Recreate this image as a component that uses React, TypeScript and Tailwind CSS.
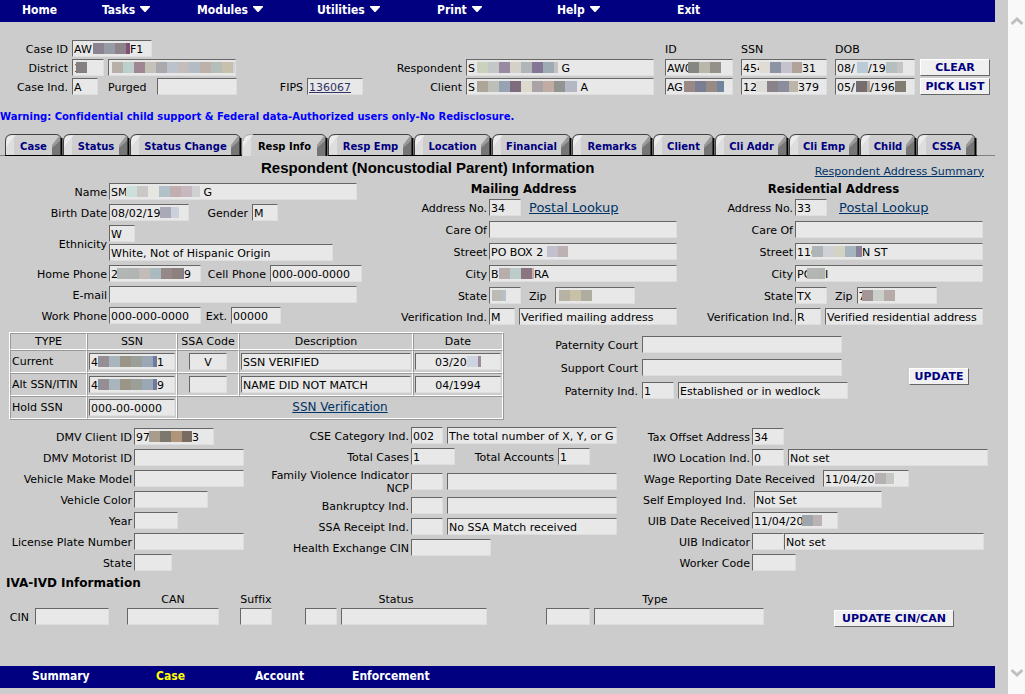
import { useId } from "react";
import type { ReactNode } from "react";

type Mosaic = { cells: string[]; last?: number };
type Part = string | Mosaic;
type Mask = { at: number; parts: Part[] };

const CELL = 11;

function MosaicStrip({ cells, last = CELL }: Mosaic) {
  const width = (cells.length - 1) * CELL + last;
  return (
    <svg width={width} height="11" className="shrink-0" aria-hidden="true">
      {cells.map((c, i) => (
        <rect key={i} x={i * CELL} y="0" width={i === cells.length - 1 ? last : CELL} height="11" fill={c} />
      ))}
    </svg>
  );
}

type BoxProps = {
  w: string;
  value?: string;
  mask?: Mask;
  id?: string;
  name?: string;
  className?: string;
};

function Box({ w, value = "", mask, id, name, className = "" }: BoxProps) {
  return (
    <span className={`relative block shrink-0 ${w}`}>
      <input
        id={id}
        aria-label={name}
        defaultValue={value}
        className={`block h-[17px] w-full border border-t-[#666] border-r-[#dedede] border-b-[#dedede] border-l-[#666] bg-[#e8e8e8] px-px pt-0.5 text-[11px] leading-[13px] text-black outline-none ${className}`}
      />
      {mask && (
        <span
          className="pointer-events-none absolute inset-y-0 flex items-center leading-[15px] whitespace-pre"
          style={{ left: mask.at }}
        >
          {mask.parts.map((p, i) =>
            typeof p === "string" ? (
              <span key={i} className="pt-0.5">
                {p}
              </span>
            ) : (
              <MosaicStrip key={i} {...p} />
            ),
          )}
        </span>
      )}
    </span>
  );
}

type FieldProps = BoxProps & {
  label: string;
  lw?: string;
  gap?: string;
  rowClass?: string;
  children?: ReactNode;
};

function Field({ label, lw = "", gap = "gap-0.5", rowClass = "h-[17px]", children, ...box }: FieldProps) {
  const id = useId();
  return (
    <div className={`flex items-center ${gap} ${rowClass}`}>
      <label htmlFor={id} className={`shrink-0 pt-0.5 text-right ${lw}`}>
        {label}
      </label>
      <Box {...box} id={id} />
      {children}
    </div>
  );
}

function PushButton({ w, children }: { w: string; children: ReactNode }) {
  return (
    <button
      type="button"
      className={`flex h-[17px] shrink-0 items-center justify-center border border-t-white border-r-[#666] border-b-[#666] border-l-white bg-[#f0f0f0] text-[11px] leading-none font-bold whitespace-nowrap text-[#000080] ${w}`}
    >
      {children}
    </button>
  );
}

const topMenu = [
  { label: "Home", w: "w-20" },
  { label: "Tasks", menu: true, w: "w-[95px]" },
  { label: "Modules", menu: true, w: "w-[120px]" },
  { label: "Utilities", menu: true, w: "w-[120px]" },
  { label: "Print", menu: true, w: "w-[120px]" },
  { label: "Help", menu: true, w: "w-[120px]" },
  { label: "Exit", w: "w-[120px]" },
];

const bottomMenu = [
  { label: "Summary", w: "w-[124px]" },
  { label: "Case", active: true, w: "w-[99px]" },
  { label: "Account", w: "w-[97px]" },
  { label: "Enforcement", w: "w-[120px]" },
];

const barFont = "font-['DejaVu_Sans_Condensed','DejaVu_Sans',sans-serif] font-bold";

function TopBar() {
  return (
    <nav className={`flex h-[22px] bg-[#000080] pb-0.5 pl-[22px] text-[12px] text-white ${barFont}`}>
      {topMenu.map((m) => (
        <div key={m.label} className={`flex ${m.w}`}>
          <button type="button" className="flex items-center gap-[5px]">
            {m.label}
            {m.menu && (
              <svg width="10" height="9" viewBox="0 0 10 9" fill="currentColor" aria-hidden="true">
                <path d="M0 0h10v1L5.500 6h-1L0 1z" />
              </svg>
            )}
          </button>
        </div>
      ))}
    </nav>
  );
}

function BottomBar() {
  return (
    <nav className={`flex h-[22px] bg-[#000080] pb-0.5 pl-8 text-[12px] text-white ${barFont}`}>
      {bottomMenu.map((m) => (
        <div key={m.label} className={`flex ${m.w}`}>
          <button type="button" className={m.active ? "text-[#ffff00]" : ""}>
            {m.label}
          </button>
        </div>
      ))}
    </nav>
  );
}

const tabs = [
  { label: "Case", w: "w-[58px]" },
  { label: "Status", w: "w-[67px]" },
  { label: "Status Change", w: "w-[112px]" },
  { label: "Resp Info", w: "w-[86px]", active: true },
  { label: "Resp Emp", w: "w-[86px]" },
  { label: "Location", w: "w-[78px]" },
  { label: "Financial", w: "w-[80px]" },
  { label: "Remarks", w: "w-[81px]" },
  { label: "Client", w: "w-[62px]" },
  { label: "Cli Addr", w: "w-[74px]" },
  { label: "Cli Emp", w: "w-[71px]" },
  { label: "Child", w: "w-[57px]" },
  { label: "CSSA", w: "w-[60px]" },
];

function Tabs() {
  return (
    <div className="mt-[11px] flex h-[22px] items-stretch text-[10px] font-bold" role="tablist">
      <span className="w-[5px] border-b border-[#808080]" />
      {tabs.map((t) => (
        <button
          key={t.label}
          type="button"
          role="tab"
          aria-selected={!!t.active}
          className={`flex h-[22px] shrink-0 items-stretch justify-between ${t.w} ${t.active ? "text-black" : "text-[#000080]"}`}
        >
          <svg width="11" height="22" viewBox="0 0 11 22" className="shrink-0" aria-hidden="true">
            <path d="M1 22V7Q1 1 7 1H11V22z" fill="#cecece" />
            <path d="M1 22V7Q1 1 7 1H11L9 4V22z" fill="#dedede" />
            <path d="M1 13V8Q1 2 7 1.500H10z" fill="#ececec" />
            <path
              d={t.active ? "M1 7Q2 .5 8 .5H11" : "M.5 22V7Q.5 .5 7 .5H11"}
              fill="none"
              stroke={t.active ? "#aaa" : "#404040"}
            />
            {!t.active && <path d="M0 21.500H11" stroke="#000" />}
          </svg>
          <span
            className={`flex grow items-center justify-center border-t border-b border-t-[#404040] bg-[#cecece] pt-0.5 whitespace-nowrap ${t.active ? "border-b-[#cecece]" : "border-b-black"}`}
          >
            {t.label}
          </span>
          <svg width="12" height="22" viewBox="0 0 12 22" className="shrink-0" aria-hidden="true">
            <path d="M0 1H6Q11 2 11 7V22H0z" fill="#cecece" />
            <path d="M1 22V12L9 3L11 7V22z" fill="#757575" />
            <path d="M1 14V11L8 2L10 6z" fill="#999" />
            <path d="M0 .5H5Q9 .5 10.500 5" fill="none" stroke="#404040" />
            <path d="M10.500 4V22" stroke="#000" strokeWidth="2" />
            {!t.active && <path d="M0 21.500H12" stroke="#000" />}
          </svg>
        </button>
      ))}
      <span className="grow border-b border-[#808080]" />
    </div>
  );
}

function CaseHeader() {
  const purged = useId();
  return (
    <section className="flex pt-[18px]">
      <div className="flex w-[363px] shrink-0 flex-col gap-0.5">
        <Field
          label="Case ID"
          lw="w-[68px]"
          gap="gap-1"
          w="w-20"
          value="AW"
          mask={{ at: 21, parts: [{ cells: ["#8b8490", "#979ba5", "#8c8489", "#7f5178"], last: 4 }, "F1"] }}
        />
        <Field label="District" lw="w-[68px]" gap="gap-1" w="w-8" value="1" mask={{ at: 4, parts: [{ cells: ["#857f82"] }] }}>
          <Box
            w="w-32"
            name="District name"
            mask={{
              at: 4,
              parts: [
                {
                  cells: ["#b7b0a9", "#bcd0cb", "#a08592", "#c4c2b8", "#aaa9ad", "#bcc2cc", "#c5bcbc", "#b3bcc4", "#bdb1a9", "#b5bdb8", "#c9c0ab", "#cfd3df"],
                  last: 2,
                },
              ],
            }}
          />
        </Field>
        <div className="flex items-center">
          <Field label="Case Ind." lw="w-[68px]" gap="gap-1" w="w-[26px]" value="A" />
          <label htmlFor={purged} className="w-[59px] pt-0.5 pl-2.5">
            Purged
          </label>
          <Box w="w-20" id={purged} />
          <div className="ml-auto flex h-[17px] items-center gap-1">
            <span className="pt-0.5">FIPS</span>
            <a
              href="#fips"
              className="block h-[17px] w-14 border border-t-[#666] border-r-[#dedede] border-b-[#dedede] border-l-[#666] bg-[#e8e8e8] px-px leading-[17px] text-[#333366] underline"
            >
              136067
            </a>
          </div>
        </div>
      </div>
      <div className="grid grid-cols-[103px_199px_76px_94px_85px_70px] grid-rows-[17px_17px_17px] items-center gap-y-0.5">
        <span className="col-start-3 pt-0.5">ID</span>
        <span className="pt-0.5">SSN</span>
        <span className="pt-0.5">DOB</span>
        <span />
        <label htmlFor="respondent" className="pt-0.5 pr-1 text-right">
          Respondent
        </label>
        <Box
          id="respondent"
          w="w-[188px]"
          value="S"
          mask={{
            at: 11,
            parts: [
              { cells: ["#cad1bd", "#c4c7c8", "#988aa0", "#d5d1c9", "#b0b6b8", "#857695", "#9eaab4", "#c7c0c2"], last: 4 },
              " G",
            ],
          }}
        />
        <Box w="w-[68px]" name="Respondent ID" value="AW0" mask={{ at: 23, parts: [{ cells: ["#858783", "#b9b7aa", "#93918a"] }] }} />
        <Box
          w="w-[86px]"
          name="Respondent SSN"
          value="454"
          mask={{ at: 18, parts: [{ cells: ["#e0dcd5", "#8c93a3", "#c3c2cd", "#b0a49a"], last: 10 }, "31"] }}
        />
        <Box
          w="w-20"
          name="Respondent DOB"
          value="08/"
          mask={{ at: 22, parts: [{ cells: ["#b9ccd5"] }, "/19", { cells: ["#b5bfbf", "#c4c5c3"], last: 6 }] }}
        />
        <PushButton w="w-[70px]">CLEAR</PushButton>
        <label htmlFor="client" className="pt-0.5 pr-1 text-right">
          Client
        </label>
        <Box
          id="client"
          w="w-[188px]"
          value="S"
          mask={{
            at: 11,
            parts: [
              { cells: ["#aca598", "#bcc0b8", "#96a3b2", "#806a7e", "#dcdacd", "#aaa3a6", "#c0aca3", "#919490", "#b3b8c4", "#aeb7c8"], last: 1 },
              " A",
            ],
          }}
        />
        <Box
          w="w-[68px]"
          name="Client ID"
          value="AG"
          mask={{ at: 19, parts: [{ cells: ["#998884", "#7a7e92", "#998a86", "#71869c"], last: 7 }] }}
        />
        <Box
          w="w-[86px]"
          name="Client SSN"
          value="12"
          mask={{ at: 15, parts: [{ cells: ["#dcdcd8", "#8a8289", "#8c8c9f", "#bcb6a9"], last: 9 }, "379"] }}
        />
        <Box
          w="w-20"
          name="Client DOB"
          value="05/"
          mask={{ at: 21, parts: [{ cells: ["#756d70", "#b0a69b"], last: 3 }, "/196", { cells: ["#837c70"] }] }}
        />
        <PushButton w="w-[70px]">PICK LIST</PushButton>
      </div>
    </section>
  );
}

function Personal() {
  return (
    <div className="flex flex-col gap-1 pt-[3px]">
      <Field
        label="Name"
        lw="w-[107px]"
        w="w-[248px]"
        value="SM"
        mask={{
          at: 17,
          parts: [{ cells: ["#cbe0dc", "#cbc7c7", "#e6e5e0", "#b0c1ca", "#c2adaf", "#c7b8bf", "#ced0d2"], last: 8 }, " G"],
        }}
      />
      <Field
        label="Birth Date"
        lw="w-[107px]"
        w="w-20"
        value="08/02/19"
        mask={{ at: 51, parts: [{ cells: ["#aaa9b7", "#ccd0da"], last: 8 }] }}
      >
        <Field label="Gender" lw="w-[43px]" gap="gap-1" rowClass="ml-3.5" w="w-[26px]" value="M" />
      </Field>
      <div className="flex items-center gap-0.5">
        <label htmlFor="ethnicity" className="w-[107px] pt-0.5 text-right">
          Ethnicity
        </label>
        <div className="flex flex-col gap-0.5">
          <Box w="w-[26px]" id="ethnicity" value="W" />
          <Box w="w-56" name="Ethnicity description" value="White, Not of Hispanic Origin" />
        </div>
      </div>
      <Field
        label="Home Phone"
        lw="w-[107px]"
        w="w-[92px]"
        value="2"
        mask={{
          at: 8,
          parts: [{ cells: ["#b3b7b4", "#b0b4b3", "#c2bcb9", "#abb9c0", "#958886", "#8d807d", "#6c80b5"], last: 1 }, "9"],
        }}
      >
        <Field label="Cell Phone" lw="w-[61px]" gap="gap-1" rowClass="ml-0.5" w="w-[92px]" value="000-000-0000" />
      </Field>
      <Field label="E-mail" lw="w-[107px]" w="w-[248px]" />
      <Field label="Work Phone" lw="w-[107px]" w="w-[92px]" value="000-000-0000">
        <Field label="Ext." lw="w-[22px]" gap="gap-1" rowClass="ml-0.5" w="w-[50px]" value="00000" />
      </Field>
    </div>
  );
}

type AddressProps = {
  title: string;
  lw: string;
  no: string;
  linkGap: string;
  street: string;
  streetMask: Mask;
  city: string;
  cityMask: Mask;
  state: string;
  stateMask?: Mask;
  zipGap: string;
  zip: string;
  zipMask: Mask;
  ind: string;
  indText: string;
};

function Address(a: AddressProps) {
  return (
    <div className="flex flex-col">
      <h3 className={`h-[19px] w-[307px] text-center text-[13px] leading-[17px] ${barFont}`}>{a.title}</h3>
      <div className="flex flex-col gap-[5px]">
        <Field label="Address No." lw={a.lw} w="w-8" value={a.no}>
          <a href="#postal" className={`text-[13px] leading-[17px] text-[#003366] underline ${a.linkGap}`}>
            Postal Lookup
          </a>
        </Field>
        <Field label="Care Of" lw={a.lw} w="w-[188px]" />
        <Field label="Street" lw={a.lw} w="w-[188px]" value={a.street} mask={a.streetMask} />
        <Field label="City" lw={a.lw} w="w-[188px]" value={a.city} mask={a.cityMask} />
        <Field label="State" lw={a.lw} w="w-8" value={a.state} mask={a.stateMask}>
          <Field label="Zip" gap={a.zipGap} rowClass="ml-1.5" w="w-20" value={a.zip} mask={a.zipMask} />
        </Field>
      </div>
      <Field label="Verification Ind." lw={a.lw} rowClass="mt-1" w="w-[26px]" value={a.ind}>
        <span className="ml-0.5">
          <Box w="w-[158px]" name="Verification description" value={a.indText} />
        </span>
      </Field>
    </div>
  );
}

const th = "border border-t-[#999] border-r-white border-b-white border-l-[#999] p-0 text-center font-normal leading-[15px] whitespace-nowrap";
const td = "border border-t-[#999] border-r-white border-b-white border-l-[#999] px-px py-0";

const ssnCells = ["#958e95", "#a9b5bd", "#9b9588", "#9a9f98", "#9aa8b6", "#6e7a9f"];

function SsnTable() {
  return (
    <table className="ml-[9px] w-[495px] shrink-0 table-fixed border-separate border-spacing-0 self-start border border-t-white border-r-[#999] border-b-[#999] border-l-white">
      <thead>
        <tr className="h-[17px]">
          <th className={`w-[77px] ${th}`}>TYPE</th>
          <th className={`w-[90px] ${th}`}>SSN</th>
          <th className={`w-[62px] ${th}`}>SSA Code</th>
          <th className={`w-[174px] ${th}`}>Description</th>
          <th className={`w-[90px] ${th}`}>Date</th>
        </tr>
      </thead>
      <tbody>
        <tr className="h-[23px]">
          <td className={td}>Current</td>
          <td className={td}>
            <Box w="w-[86px]" name="Current SSN" value="4" mask={{ at: 9, parts: [{ cells: ssnCells, last: 4 }, "1"] }} />
          </td>
          <td className={td}>
            <div className="flex justify-center">
              <Box w="w-[38px]" name="Current SSA code" value="V" className="text-center" />
            </div>
          </td>
          <td className={td}>
            <Box w="w-[170px]" name="Current description" value="SSN VERIFIED" />
          </td>
          <td className={td}>
            <Box
              w="w-[86px]"
              name="Current date"
              value="03/20"
              className="pl-[19px]"
              mask={{ at: 52, parts: [{ cells: ["#cdd4dd", "#9e8a9f"], last: 3 }] }}
            />
          </td>
        </tr>
        <tr className="h-[23px]">
          <td className={`whitespace-nowrap ${td}`}>Alt SSN/ITIN</td>
          <td className={td}>
            <Box w="w-[86px]" name="Alternate SSN" value="4" mask={{ at: 9, parts: [{ cells: ssnCells, last: 4 }, "9"] }} />
          </td>
          <td className={td}>
            <div className="flex justify-center">
              <Box w="w-[38px]" name="Alternate SSA code" />
            </div>
          </td>
          <td className={td}>
            <Box w="w-[170px]" name="Alternate description" value="NAME DID NOT MATCH" />
          </td>
          <td className={td}>
            <Box w="w-[86px]" name="Alternate date" value="04/1994" className="text-center" />
          </td>
        </tr>
        <tr className="h-[23px]">
          <td className={td}>Hold SSN</td>
          <td className={td}>
            <Box w="w-[86px]" name="Hold SSN" value="000-00-0000" />
          </td>
          <td colSpan={3} className={`text-center ${td}`}>
            <a href="#ssn" className="text-[12px] text-[#003366] underline">
              SSN Verification
            </a>
          </td>
        </tr>
      </tbody>
    </table>
  );
}

function VehicleFields() {
  return (
    <div className="flex flex-col gap-1 pt-px">
      <Field
        label="DMV Client ID"
        lw="w-[132px]"
        w="w-20"
        value="97"
        mask={{ at: 15, parts: [{ cells: ["#a89c8c", "#7d786d", "#b0957a", "#786b62"], last: 10 }, "3"] }}
      />
      <Field label="DMV Motorist ID" lw="w-[132px]" w="w-[110px]" />
      <Field label="Vehicle Make Model" lw="w-[132px]" w="w-[110px]" />
      <Field label="Vehicle Color" lw="w-[132px]" w="w-[74px]" />
      <Field label="Year" lw="w-[132px]" w="w-11" />
      <Field label="License Plate Number" lw="w-[132px]" w="w-[110px]" />
      <Field label="State" lw="w-[132px]" w="w-[38px]" />
    </div>
  );
}

function Pair({ name, value }: { name: string; value?: string }) {
  return (
    <span className="ml-0.5">
      <Box w="w-[170px]" name={name} value={value} />
    </span>
  );
}

function IndicatorFields() {
  return (
    <div className="flex flex-col gap-1">
      <Field label="CSE Category Ind." lw="w-[149px]" w="w-8" value="002">
        <Pair name="CSE category" value="The total number of X, Y, or G" />
      </Field>
      <Field label="Total Cases" lw="w-[149px]" w="w-11" value="1">
        <Field label="Total Accounts" lw="w-[83px]" gap="gap-1" rowClass="ml-3.5" w="w-8" value="1" />
      </Field>
      <Field label="Family Violence Indicator NCP" lw="w-[149px] leading-[13px]" rowClass="h-6" w="w-8">
        <Pair name="Family violence description" />
      </Field>
      <Field label="Bankruptcy Ind." lw="w-[149px]" w="w-8">
        <Pair name="Bankruptcy description" />
      </Field>
      <Field label="SSA Receipt Ind." lw="w-[149px]" w="w-8">
        <Pair name="SSA receipt description" value="No SSA Match received" />
      </Field>
      <Field label="Health Exchange CIN" lw="w-[149px]" w="w-20" />
    </div>
  );
}

function WorkFields() {
  return (
    <div className="flex flex-col gap-1 pt-px">
      <Field label="Tax Offset Address" lw="w-[116px]" w="w-8" value="34" />
      <Field label="IWO Location Ind." lw="w-[116px]" w="w-8" value="0">
        <span className="ml-0.5">
          <Box w="w-[200px]" name="IWO location" value="Not set" />
        </span>
      </Field>
      <Field
        label="Wage Reporting Date Received"
        gap="gap-2"
        rowClass="h-[17px] pl-[3px]"
        lw="w-[178px]"
        w="w-[86px]"
        value="11/04/20"
        mask={{ at: 52, parts: [{ cells: ["#b5b0b1", "#c5c7c2"], last: 8 }] }}
      />
      <Field
        label="Self Employed Ind."
        gap="gap-2"
        rowClass="h-[17px] pl-[3px]"
        lw="w-[109px]"
        w="w-32"
        value="Not Set"
      />
      <Field
        label="UIB Date Received"
        lw="w-[116px]"
        w="w-[86px]"
        value="11/04/20"
        mask={{ at: 50, parts: [{ cells: ["#9fa6ab", "#bab2b4"], last: 9 }] }}
      />
      <div className="flex">
        <Field label="UIB Indicator" lw="w-[116px]" w="w-8" />
        <Box w="w-[200px]" name="UIB description" value="Not set" />
      </div>
      <Field label="Worker Code" lw="w-[116px]" w="w-11" />
    </div>
  );
}

function CinCan() {
  return (
    <section>
      <h3 className="mt-1 h-[14px] pl-1.5 text-[12px] leading-[16px] font-bold">IVA-IVD Information</h3>
      <div className="mt-[3px] flex items-end">
        <Field label="CIN" gap="gap-1.5" lw="w-[22px]" rowClass="ml-[7px] h-[17px]" w="w-[74px]" />
        <div className="ml-[18px] flex flex-col items-center gap-px">
          <label htmlFor="can" className="leading-[15px]">
            CAN
          </label>
          <Box id="can" w="w-[92px]" />
        </div>
        <div className="ml-[21px] flex w-8 flex-col items-center gap-px">
          <label htmlFor="suffix" className="leading-[15px]">
            Suffix
          </label>
          <Box id="suffix" w="w-8" />
        </div>
        <div className="ml-[33px] flex flex-col items-center gap-px">
          <label htmlFor="status" className="leading-[15px]">
            Status
          </label>
          <div className="flex gap-1">
            <Box id="status" w="w-8" />
            <Box name="Status description" w="w-[146px]" />
          </div>
        </div>
        <div className="ml-[59px] flex flex-col items-center gap-px">
          <label htmlFor="type" className="leading-[15px]">
            Type
          </label>
          <div className="flex gap-1">
            <Box id="type" w="w-11" />
            <Box name="Type description" w="w-[170px]" />
          </div>
        </div>
        <div className="-mb-0.5 ml-[70px]">
          <PushButton w="w-[120px]">UPDATE CIN/CAN</PushButton>
        </div>
      </div>
    </section>
  );
}

function ScrollTrack() {
  return (
    <div className="flex w-[17px] shrink-0 flex-col items-center justify-between bg-[#f9f9f9] py-4">
      <svg width="12" height="10" viewBox="0 0 12 10" fill="none" stroke="#bfbfbf" strokeWidth="3" aria-hidden="true">
        <path d="M.5 8 6 3l5.500 5" />
      </svg>
      <svg width="12" height="10" viewBox="0 0 12 10" fill="none" stroke="#bfbfbf" strokeWidth="3" aria-hidden="true">
        <path d="M.5 2 6 7l5.500-5" />
      </svg>
    </div>
  );
}

export default function App() {
  return (
    <div className="flex min-h-screen bg-[#cccccc] font-['DejaVu_Sans',sans-serif] text-[11px] leading-[15px] text-black [font-variant-ligatures:none]">
      <main className="mr-[13px] flex min-w-0 grow flex-col">
        <TopBar />
        <CaseHeader />
        <p className="mt-3.5 text-[10px] leading-4 font-bold whitespace-nowrap text-[#0000ff]">
          Warning: Confidential child support &amp; Federal data-Authorized users only-No Redisclosure.
        </p>
        <div className="-mt-0.5">
          <Tabs />
        </div>
        <div className="flex h-6 items-center pr-[11px] pl-[261px]">
          <h2 className="font-['Liberation_Sans',Arial,sans-serif] text-[15px] leading-6 font-bold whitespace-nowrap">
            Respondent (Noncustodial Parent) Information
          </h2>
          <a href="#summary" className="mt-1.5 ml-auto whitespace-nowrap text-[#003366] underline">
            Respondent Address Summary
          </a>
        </div>
        <section className="grid grid-cols-[370fr_310fr_315fr]">
          <Personal />
          <Address
            title="Mailing Address"
            lw="w-[117px]"
            no="34"
            linkGap="ml-1.5"
            street="PO BOX 2"
            streetMask={{ at: 58, parts: [{ cells: ["#c1c0cc", "#beb1b4"], last: 10 }] }}
            city="B"
            cityMask={{ at: 10, parts: [{ cells: ["#b7adac", "#bccdc9", "#8c7480", "#c5afb2"], last: 2 }, "RA"] }}
            state=""
            stateMask={{ at: 3, parts: [{ cells: ["#bbbcb6", "#b5c1ce"], last: 3 }] }}
            zipGap="gap-2"
            zip=""
            zipMask={{ at: 4, parts: [{ cells: ["#b6b3a4", "#c9c1a7", "#afada0"] }] }}
            ind="M"
            indText="Verified mailing address"
          />
          <Address
            title="Residential Address"
            lw="w-[113px]"
            no="33"
            linkGap="ml-2.5"
            street="110"
            streetMask={{ at: 17, parts: [{ cells: ["#adb5b9", "#d0d1d4", "#d2d3c3", "#a6b4bf", "#89809a"], last: 6 }, "N ST"] }}
            city="PO"
            cityMask={{ at: 12, parts: [{ cells: ["#b4b6b4", "#b0b5b0"], last: 7 }, "I"] }}
            state="TX"
            zipGap="gap-1"
            zip="7"
            zipMask={{ at: 5, parts: [{ cells: ["#a49599", "#cbcfca", "#b7abaa"] }] }}
            ind="R"
            indText="Verified residential address"
          />
        </section>
        <section className="mt-[7px] flex">
          <SsnTable />
          <div className="flex flex-col gap-1.5 pt-1">
            <Field label="Paternity Court" lw="w-[134px]" gap="gap-1" w="w-[200px]" />
            <Field label="Support Court" lw="w-[134px]" gap="gap-1" w="w-[200px]" />
            <Field label="Paternity Ind." lw="w-[134px]" gap="gap-1" w="w-8" value="1">
              <Box w="w-[170px]" name="Paternity description" value="Established or in wedlock" />
            </Field>
          </div>
          <div className="ml-[61px] pt-9">
            <PushButton w="w-[60px]">UPDATE</PushButton>
          </div>
        </section>
        <section className="mt-[7px] grid grid-cols-[260fr_374fr_361fr]">
          <VehicleFields />
          <IndicatorFields />
          <WorkFields />
        </section>
        <CinCan />
        <div className="mt-auto pt-6 pb-1.5">
          <BottomBar />
        </div>
      </main>
      <ScrollTrack />
    </div>
  );
}
